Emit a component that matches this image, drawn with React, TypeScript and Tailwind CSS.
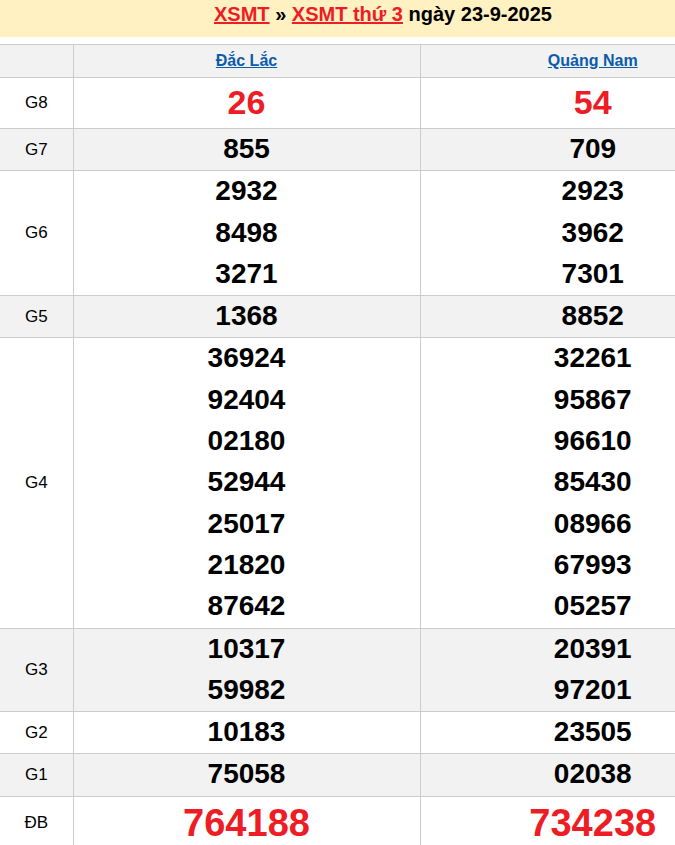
import React from 'react';

interface Prize {
    label: string;
    a: string[];
    b: string[];
    kind?: 'big' | 'special';
}

const prizes: Prize[] = [
    { label: 'G8', a: ['26'], b: ['54'], kind: 'big' },
    { label: 'G7', a: ['855'], b: ['709'] },
    { label: 'G6', a: ['2932', '8498', '3271'], b: ['2923', '3962', '7301'] },
    { label: 'G5', a: ['1368'], b: ['8852'] },
    {
        label: 'G4',
        a: ['36924', '92404', '02180', '52944', '25017', '21820', '87642'],
        b: ['32261', '95867', '96610', '85430', '08966', '67993', '05257'],
    },
    { label: 'G3', a: ['10317', '59982'], b: ['20391', '97201'] },
    { label: 'G2', a: ['10183'], b: ['23505'] },
    { label: 'G1', a: ['75058'], b: ['02038'] },
    { label: 'ĐB', a: ['764188'], b: ['734238'], kind: 'special' },
];

function Numbers({ list, kind }: { list: string[]; kind?: 'big' | 'special' }) {
    if (kind === 'big') {
        return <div className="h-[50px] leading-[49px] text-[34px] font-bold text-[#ee1c25]">{list[0]}</div>;
    }
    if (kind === 'special') {
        return <div className="h-[52px] leading-[52px] text-[38px] font-bold text-[#ee1c25]">{list[0]}</div>;
    }
    return (
        <>
            {list.map((n, i) => (
                <div key={i} className="h-[41.3px] leading-[40px] text-[28px] font-bold text-black">
                    {n}
                </div>
            ))}
        </>
    );
}

export default function App() {
    return (
        <div className="w-full overflow-hidden bg-white" style={{ fontFamily: '"Liberation Sans", Arial, sans-serif' }}>
            <div className="w-[766px]">
                <h2 className="h-[37px] bg-[#fff1c1] text-center text-[20px] font-bold leading-[28px] text-black">
                    <a className="text-[#ee1c25] underline">XSMT</a> » <a className="text-[#ee1c25] underline">XSMT thứ 3</a> ngày 23-9-2025
                </h2>
                <table className="mt-[7px] w-full border-collapse text-center">
                    <colgroup>
                        <col className="w-[73px]" />
                        <col className="w-[347px]" />
                        <col />
                    </colgroup>
                    <thead>
                        <tr className="bg-[#f2f2f2]">
                            <th className="h-[33px] border-t border-[#cccccc]"></th>
                            <th className="border border-[#cccccc] text-[16px] font-bold">
                                <a className="text-[#0b5cab] underline">Đắc Lắc</a>
                            </th>
                            <th className="border border-[#cccccc] text-[16px] font-bold">
                                <a className="text-[#0b5cab] underline">Quảng Nam</a>
                            </th>
                        </tr>
                    </thead>
                    <tbody>
                        {prizes.map((p, i) => (
                            <tr key={p.label} className={i % 2 === 1 ? 'bg-[#f2f2f2]' : 'bg-white'}>
                                <td className="border-y border-[#cccccc] p-0 text-[17px] text-black">{p.label}</td>
                                <td className="border border-[#cccccc] p-0">
                                    <Numbers list={p.a} kind={p.kind} />
                                </td>
                                <td className="border border-[#cccccc] p-0">
                                    <Numbers list={p.b} kind={p.kind} />
                                </td>
                            </tr>
                        ))}
                    </tbody>
                </table>
            </div>
        </div>
    );
}
